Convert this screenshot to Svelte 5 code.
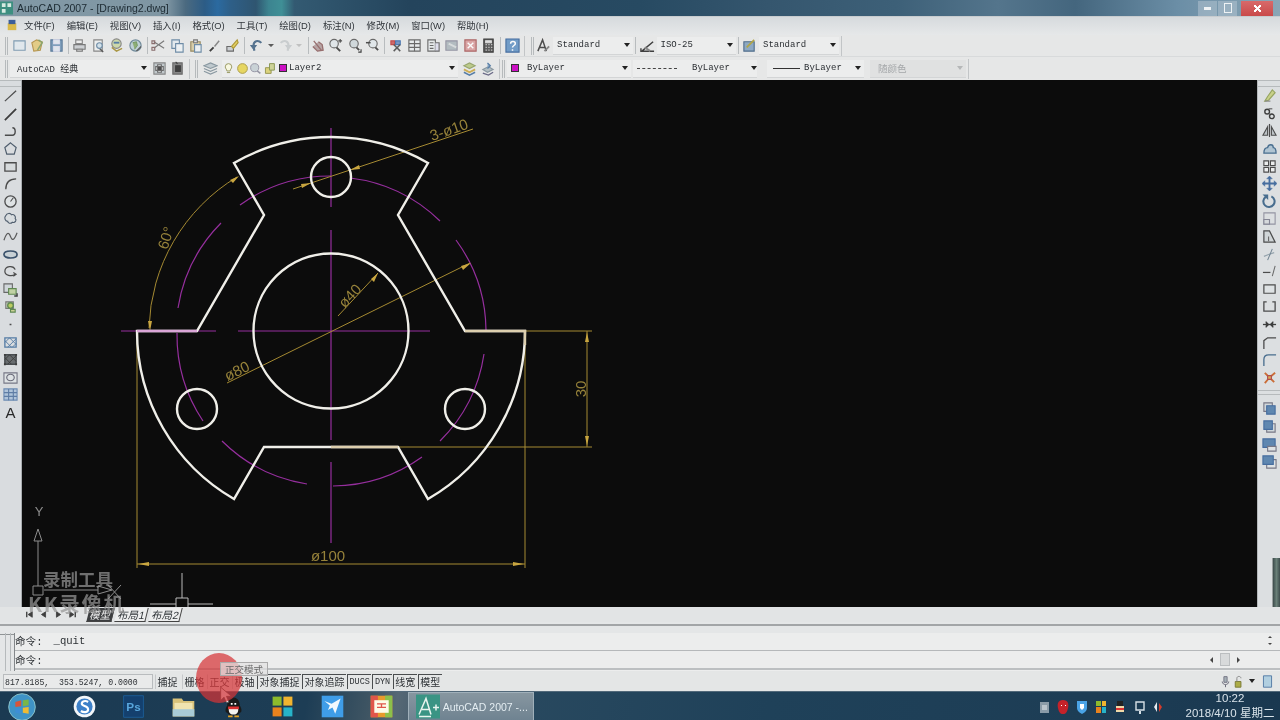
<script>
  const ink = '#2f3438';
  const p = (d, s = ink, f = 'none', w = 1.2) => ({ d, s, f, w });

  const ic = {
    page: [p('M2 3h12v10H2z', '#6f8fa8', '#dfe8ee')],
    open: [p('M2 5l5-3 6 2-2 9-7 1z', '#b08a3a', '#e2c877'), p('M9 2l4 3-5 8', '#7a9a5a', 'none', 1.6)],
    save: [p('M2 2h12v12H2z', '#44698f', '#6f93b5'), p('M5 2h6v4H5zM5 9h6v5H5z', '#dde', '#dfe6ec')],
    print: [p('M4 2h7v4H4z', '#777', '#eee'), p('M2 7h12v5H2z', '#666', '#c9cdd0'), p('M5 12h6v2H5z', '#666', '#fff')],
    preview: [p('M3 2h9v12H3z', '#777', '#eef0f0'), p('M9 11l4 4', '#444', 'none', 1.6), p('M6 8a3 3 0 1 0 6 0a3 3 0 1 0-6 0', '#5a7d9c', '#cfe0ea')],
    plot: [p('M3 6a5 5 0 1 0 10 0a5 5 0 1 0-10 0', '#777', '#c9d6a0'), p('M3 10l5 4 6-3', '#a08a2a', 'none', 1.6), p('M5 5h6', '#3f6c9c', 'none', 2)],
    globe: [p('M2 8a6 6 0 1 0 12 0a6 6 0 1 0-12 0', '#5c7a8c', '#b9ccd4'), p('M5 5l4-1 1 4-3 4', '#5f8a4a', '#7ea463', 1), p('M9 14l5-5', '#444', 'none', 1.4)],
    cut: [p('M3 4l11 7M3 11l11-8', '#666', 'none', 1.2), p('M1 3h3v3H1zM1 10h3v3H1z', '#7a5a5a', 'none', 1.2)],
    copy: [p('M2 2h8v9H2z', '#5a7d9c', '#e3eaef'), p('M6 6h8v9H6z', '#5a7d9c', '#eef2f5')],
    paste: [p('M3 4h10v10H3z', '#8a7a4a', '#d5c9a0'), p('M6 2h4v3H6z', '#666', '#ddd'), p('M7 7h7v8H7z', '#5a7d9c', '#eef2f5')],
    brush: [p('M3 14l4-4', '#222', 'none', 2), p('M8 9l5-6', '#777', 'none', 1.6)],
    match: [p('M2 9h7v5H2z', '#555', '#c9cdd0'), p('M7 9l6-7 1 3-5 6z', '#a38a1a', '#e3cc4a')],
    undo: [p('M13 5C9 1 4 3 4 8l1 6', '#3d5f80', 'none', 2.4), p('M1 8h6l-3 4z', '#3d5f80', '#3d5f80')],
    redo: [p('M3 5c4-4 9-2 9 3l-1 6', '#c5c9cb', 'none', 2.4), p('M15 8H9l3 4z', '#c5c9cb', '#c5c9cb')],
    dd: [p('M6 7h4l-2 2z', '#444', '#444')],
    ddoff: [p('M6 7h4l-2 2z', '#bbb', '#bbb')],
    pan: [p('M4 3l8 10M3 9l5 5 6-1-1-6-4-3', '#8a5a5a', '#b09a9a', 1.4)],
    zoom: [p('M2 6a4.5 4.5 0 1 0 9 0a4.5 4.5 0 1 0-9 0', '#555', '#dfe6ea'), p('M9 10l4 4', '#333', 'none', 2), p('M11 3h4M13 1v4', '#333')],
    zoomw: [p('M3 6a4.5 4.5 0 1 0 9 0a4.5 4.5 0 1 0-9 0', '#555', '#cdd6da'), p('M10 10l3 3', '#333', 'none', 2), p('M12 15h3v-3', '#222')],
    zoomp: [p('M4 6a4.5 4.5 0 1 0 9 0a4.5 4.5 0 1 0-9 0', '#555', '#dfe6ea'), p('M11 10l3 3', '#333', 'none', 2), p('M1 5h5', '#333', 'none', 1.6)],
    props: [p('M2 3h4v4H2z', '#b33', '#c55'), p('M7 3h5v4H7z', '#36a', '#68b'), p('M5 7l7 7M12 7l-7 7', '#444', 'none', 1.6)],
    grid: [p('M2 2h12v12H2z', '#555', '#e8ecee'), p('M8 2v12M2 6h12M2 10h12', '#555')],
    sheet: [p('M2 2h8v12H2z', '#555', '#e8ecee'), p('M4 5h4M4 8h4M4 11h4', '#555'), p('M10 5h4v9h-4', '#555', '#dde')],
    palette: [p('M2 3h12v10H2z', '#889', '#a9b4ba'), p('M5 6l8 4', '#d5d9db', 'none', 2)],
    markup: [p('M2 2h12v12H2z', '#a35050', '#d89a9a'), p('M5 5l6 6M11 5l-6 6', '#fff', 'none', 1.5)],
    calc: [p('M3 1h10v14H3z', '#222', '#444'), p('M5 3h6v2H5z', '#ddd', '#ddd'), p('M5 7h1M8 7h1M11 7h1M5 10h1M8 10h1M11 10h1M5 13h1M8 13h1M11 13h1', '#eee', 'none', 1.4)],
    help: [p('M1 1h14v14H1z', '#2c5a94', '#5d8fc2'), p('M6 6c0-3 5-3 5 0c0 2-3 2-3 4M8 12v1.5', '#fff', 'none', 1.6)],
    tstyle: [p('M2 14L7 2l4 12M4 10h6', '#333', 'none', 1.6), p('M9 14l5-5', '#777', 'none', 2)],
    dstyle: [p('M1 14h14M2 14l12-10', '#222', 'none', 1.6), p('M5 10l6 4', '#777', 'none', 2), p('M1 11v4', '#222', 'none', 1.5)],
    tblstyle: [p('M2 4h11v10H2z', '#36587c', '#7f9fbd'), p('M5 10l8-8', '#a89a2a', 'none', 1.8)],
    wsset: [p('M2 2h12v12H2z', '#777', '#bcc4c8'), p('M6 4h4v8H6zM4 6h8v4H4z', '#555', '#e4e6e6'), p('M7 7h2v2H7z', '#333', '#333')],
    wslock: [p('M3 2h10v12H3z', '#555', '#777'), p('M6 5h5v6H6z', '#222', '#222'), p('M6 1l2 2', '#222')],
    layers: [p('M1 5l7-3 7 3-7 3z', '#7a8b95', '#b9c4ca'), p('M1 8l7 3 7-3M1 11l7 3 7-3', '#7a8b95')],
    bulb: [p('M4 6a4 4 0 1 1 8 0c0 2-2 3-2 5H6c0-2-2-3-2-5zM6 13h4', '#8a8a4a', '#fbfbe0')],
    sun: [p('M2 8a6 6 0 1 0 12 0a6 6 0 1 0-12 0', '#a09030', '#e6d24a')],
    frozen: [p('M2 7a5 5 0 1 0 10 0a5 5 0 1 0-10 0', '#889', '#c3ced3'), p('M10 11l4 3', '#889', 'none', 2)],
    lock: [p('M3 7h7v7H3z', '#8a8a3a', '#d9cf6a'), p('M8 2h6v8H8z', '#7a8a3a', '#c9d08a')],
    match2: [p('M2 5l6-3 6 3-6 3z', '#8a9a5a', '#b7c77a'), p('M2 9l6 3 6-3', '#c9a33a', 'none', 2), p('M2 12l6 3 6-3', '#3f6c9c', 'none', 1.6)],
    prev2: [p('M3 9l6-3 5 3-6 3z', '#7a8b95', '#aab7bd'), p('M8 2l3 3-3 3', '#3f6c9c', '#7f9fbd', 1.4), p('M3 13l6 2 5-3', '#557', 'none', 1.4)],

    line: [p('M2 14L14 3', '#333', 'none', 1.3)],
    xline: [p('M2 15L14 3', '#222', 'none', 1.8)],
    pline: [p('M2 13h8c4 0 4-8 0-8', '#333', 'none', 1.5)],
    polygon: [p('M8 2l6 5-2 7H4L2 7z', '#38485a', 'none', 1.3)],
    rect: [p('M2 4h12v9H2z', '#333', '#d6dadc', 1.4)],
    arc: [p('M3 14C3 7 7 3 14 3', '#333', 'none', 1.4)],
    circle: [p('M2 8a6 6 0 1 0 12 0a6 6 0 1 0-12 0', '#333', '#dfe4e6', 1.4), p('M8 8l3-4', '#333')],
    cloud: [p('M3 5c1-3 5-3 6-1c3-1 5 2 4 4c2 2 0 5-3 4c-2 2-5 1-5-1c-3 0-4-4-2-6z', '#38485a', '#d8dde0')],
    spline: [p('M1 12c3-9 5-9 7-4s4 4 7-4', '#444', 'none', 1.3)],
    ellipse: [p('M1 8c0-5 14-5 14 0s-14 5-14 0z', '#1f3a58', '#c5ced4', 1.8)],
    earc: [p('M13 6C11 1 2 2 2 8c0 4 7 6 11 3', '#333', 'none', 1.3), p('M11 9l3 2-3 2', '#333')],
    insert: [p('M1 2h9v9H1z', '#555', '#cfd6da'), p('M6 7h8v6H6z', '#4a7a3a', '#bcd09a'), p('M12 15h3v-3', '#222', 'none', 1.5)],
    block: [p('M3 3h8v7H3z', '#666', '#cbd5bc'), p('M5 7a3 3 0 1 0 6 0a3 3 0 1 0-6 0', '#4a7a3a', '#b5c94a', 1.4), p('M8 11h5v3H8z', '#4a7a3a', '#c9d08a')],
    point: [p('M8 7.2v1.6', '#333', 'none', 2)],
    hatch: [p('M2 3h12v10H2z', '#3f6c9c', 'none', 1.4), p('M2 8l5-5M5 13l9-9M10 13l4-4M2 6l7 7M7 3l7 7', '#3f6c9c', 'none', 1)],
    gradient: [p('M2 3h12v10H2z', '#2f3438', '#55595c', 1.6), p('M2 8l5-5M5 13l9-9M2 6l7 7M7 3l7 7', '#222', 'none', 1), p('M1 3h2M13 3h2M1 13h2M13 13h2', '#222', 'none', 2)],
    region: [p('M1 3h14v11H1z', '#667', '#dfe4e6'), p('M4 8a4 3.5 0 1 0 8 0a4 3.5 0 1 0-8 0', '#556', 'none')],
    table: [p('M1 2h14v12H1z', '#5a7dac', '#a9c0da'), p('M1 6h14M1 10h14M6 2v12M11 2v12', '#4a6d9c')],

    erase: [p('M3 14l3-5 5-7 3 3-7 8z', '#8a9a4a', '#c5cf7a'), p('M3 14h6', '#777')],
    rcopy: [p('M3 6a2.5 2.5 0 1 0 5 0a2.5 2.5 0 1 0-5 0M8 11a2.5 2.5 0 1 0 5 0a2.5 2.5 0 1 0-5 0', '#222', 'none', 1.5), p('M7 3h4', '#444')],
    mirror: [p('M8 1v14', '#333', 'none', 1.2), p('M6 4L1 13h5zM10 4l5 9h-5z', '#333', '#b8bfc3')],
    offset: [p('M2 13c0-4 2-6 4-6c1-4 6-4 6 0c2 0 3 3 3 6z', '#2f5a80', '#a9c0d0', 1.4)],
    array: [p('M2 2h5v5H2zM9 2h5v5H9zM2 9h5v5H2zM9 9h5v5H9z', '#333', '#eef0f0', 1.2)],
    move: [p('M8 1v14M1 8h14', '#2c5a94', 'none', 2), p('M8 0l3 3H5zM8 16l3-3H5zM0 8l3-3v6zM16 8l-3-3v6z', '#2c5a94', '#2c5a94', .5)],
    rotate: [p('M4 3a6 6 0 1 0 6-.5', '#2f5a80', 'none', 2.2), p('M2 1l4 0 0 4z', '#2f5a80', '#2f5a80')],
    scale: [p('M2 2h12v12H2z', '#889', 'none'), p('M2 9h6v5H2z', '#778', '#d5d9dc')],
    stretch: [p('M2 14V2h6l6 12z', '#333', '#cfd4d6', 1.3), p('M7 8v5', '#555')],
    trim: [p('M2 10l5-2 6-2', '#8a9aa5', 'none', 1.2), p('M11 2L6 14', '#5f7484', 'none', 1.1)],
    extend: [p('M1 9h8', '#333', 'none', 1.3), p('M14 2l-3 11', '#555', 'none', 1.1)],
    brk: [p('M2 3h12v9H2z', '#333', '#dfe3e5', 1.3)],
    brk2: [p('M5 3H2v10h12V3h-3', '#333', 'none', 1.4)],
    join: [p('M1 8h14', '#222', 'none', 1.4), p('M4 5l3 3-3 3M12 5L9 8l3 3', '#222', '#222')],
    chamfer: [p('M2 15V6l4-3h9', '#333', 'none', 1.4)],
    fillet: [p('M2 15V8c0-3 2-5 5-5h8', '#2f5a80', 'none', 1.4)],
    explode: [p('M8 8L3 3M8 8l6-5M8 8l-5 6M8 8l5 5', '#c85a1a', 'none', 2), p('M6 6h4v4H6z', '#a33', '#d9a33a')],
    ordF: [p('M2 2h9v9H2z', '#667', '#cfd6da'), p('M5 5h9v9H5z', '#2c5a94', '#4a78a8')],
    ordB: [p('M5 5h9v9H5z', '#667', '#cfd6da'), p('M2 2h9v9H2z', '#2c5a94', '#4a78a8')],
    ordA: [p('M1 2h13v9H1z', '#2c5a94', '#4a78a8'), p('M6 10h9v5H6z', '#667', '#dfe3e5')],
    ordU: [p('M5 6h10v9H5z', '#667', '#dfe3e5'), p('M1 2h11v9H1z', '#2c5a94', '#4a78a8')],
    mic: [p('M6 2h4v7H6z', '#667', '#99a5ad'), p('M4 8c0 5 8 5 8 0M8 12v3', '#556')],
    lockS: [p('M4 8h7v7H4z', '#6a6a1a', '#a3a32a'), p('M6 8V4c0-3 5-3 5 0', '#777')],
    panel: [p('M3 1h10v14H3z', '#3f6c9c', '#a9cce0')],

    navFirst: [p('M4 4v8', '#222', 'none', 2), p('M12 4v8L6 8z', '#222', '#222')],
    navPrev: [p('M11 4v8L5 8z', '#222', '#222')],
    navNext: [p('M5 4v8l6-4z', '#222', '#222')],
    navLast: [p('M12 4v8', '#222', 'none', 2), p('M4 4v8l6-4z', '#222', '#222')]
  };

  const menus = ['文件(F)', '编辑(E)', '视图(V)', '插入(I)', '格式(O)', '工具(T)', '绘图(D)', '标注(N)', '修改(M)', '窗口(W)', '帮助(H)'];
  const thin = ['undo', 'dd', 'redo', 'ddoff'];
  const groups = [
    ['page', 'open', 'save'],
    ['print', 'preview', 'plot', 'globe'],
    ['cut', 'copy', 'paste', 'brush', 'match'],
    ['undo', 'dd', 'redo', 'ddoff'],
    ['pan', 'zoom', 'zoomw', 'zoomp'],
    ['props', 'grid', 'sheet', 'palette', 'markup', 'calc'],
    ['help']
  ];
  const drawTools = ['line', 'xline', 'pline', 'polygon', 'rect', 'arc', 'circle', 'cloud', 'spline', 'ellipse', 'earc', 'insert', 'block', 'point', 'hatch', 'gradient', 'region', 'table'];
  const modifyTools = ['erase', 'rcopy', 'mirror', 'offset', 'array', 'move', 'rotate', 'scale', 'stretch', 'trim', 'extend', 'brk', 'brk2', 'join', 'chamfer', 'fillet', 'explode'];
  const orderTools = ['ordF', 'ordB', 'ordA', 'ordU'];
  const navs = ['navFirst', 'navPrev', 'navNext', 'navLast'];
  const toggles = [
    { t: '捕捉' }, { t: '栅格' }, { t: '正交' }, { t: '极轴' },
    { t: '对象捕捉', on: true }, { t: '对象追踪', on: true },
    { t: 'DUCS', on: true, mono: true }, { t: 'DYN', on: true, mono: true },
    { t: '线宽', on: true }, { t: '模型', on: true }
  ];

  // drawing geometry, in page pixels
  const outline = 'M234 163A194 194 0 0 1 428 163L398 215L465 331H525A194 194 0 0 1 428 499L398 447H264L234 499A194 194 0 0 1 137 331H197L264 215Z';
  const pitchArcs = [
    'M177 333A155 155 0 0 0 203 421',
    'M222 441A155 155 0 0 0 307 484',
    'M333 486A155 155 0 0 0 422 457',
    'M440 441A155 155 0 0 0 484 354',
    'M486 330A155 155 0 0 0 456 240',
    'M440 221A155 155 0 0 0 350 178',
    'M331 176A155 155 0 0 0 240 205',
    'M221 223A155 155 0 0 0 178 308'
  ];
  const holes = [[331, 177], [197, 409], [465, 409]];
</script>

{#snippet icon(name)}
  <svg class="ico" viewBox="0 0 16 16" aria-hidden="true">
    {#each ic[name] as a}
      <path d={a.d} stroke={a.s} fill={a.f} stroke-width={a.w} />
    {/each}
  </svg>
{/snippet}

{#snippet arrow()}
  <span class="arrow"></span>
{/snippet}

<div class="screen">
  <header class="title">
    <svg class="app" viewBox="0 0 14 14" aria-hidden="true">
      <path d="M0 0h14v14H0z" fill="#3d8f80" />
      <path d="M2 2h4v4H2zM8 2h4v4H8zM2 8h4v4H2z" fill="#d7ebe2" />
    </svg>
    <span class="caption">AutoCAD 2007 - [Drawing2.dwg]</span>
    <div class="winbtns">
      <i class="wb"><b class="min"></b></i>
      <i class="wb"><b class="max"></b></i>
      <i class="wb close"><b class="x"></b></i>
    </div>
  </header>

  <nav class="menu">
    <svg class="doc" viewBox="0 0 14 14" aria-hidden="true">
      <path d="M2 5h10v8H2z" fill="#d9b94a" />
      <path d="M3 1h8v5H3z" fill="#3d5f9a" />
    </svg>
    {#each menus as m}<span>{m}</span>{/each}
  </nav>

  <div class="bar one">
    <i class="grip"></i>
    {#each groups as g, n}
      {#if n > 0}<i class="sep"></i>{/if}
      {#each g as name}
        <span class="btn" class:thin={thin.includes(name)} class:first={name === 'undo'} class:pull={name === 'pan'}>{@render icon(name)}</span>
      {/each}
    {/each}
    <i class="edge"></i>
    <i class="grip style"></i>
    <span class="btn">{@render icon('tstyle')}</span>
    <div class="combo flat w-style"><span class="mono">Standard</span>{@render arrow()}</div>
    <i class="sep"></i>
    <span class="btn">{@render icon('dstyle')}</span>
    <div class="combo flat w-dim"><span class="mono">ISO-25</span>{@render arrow()}</div>
    <i class="sep"></i>
    <span class="btn">{@render icon('tblstyle')}</span>
    <div class="combo flat w-tbl"><span class="mono">Standard</span>{@render arrow()}</div>
    <i class="edge"></i>
  </div>

  <div class="bar two">
    <i class="grip"></i>
    <div class="combo w-ws"><span class="mono">AutoCAD 经典</span>{@render arrow()}</div>
    <span class="btn">{@render icon('wsset')}</span>
    <span class="btn">{@render icon('wslock')}</span>
    <i class="edge"></i>
    <i class="grip layer"></i>
    <span class="btn wide">{@render icon('layers')}</span>
    <div class="combo w-layer">
      <span class="mini">{@render icon('bulb')}</span>
      <span class="mini">{@render icon('sun')}</span>
      <span class="mini">{@render icon('frozen')}</span>
      <span class="mini">{@render icon('lock')}</span>
      <b class="swatch"></b>
      <span class="mono">Layer2</span>
      {@render arrow()}
    </div>
    <span class="btn">{@render icon('match2')}</span>
    <span class="btn">{@render icon('prev2')}</span>
    <i class="edge"></i>
    <i class="grip color"></i>
    <div class="combo w-color"><b class="swatch big"></b><span class="mono">ByLayer</span>{@render arrow()}</div>
    <div class="combo w-ltype"><i class="dash"></i><span class="mono">ByLayer</span>{@render arrow()}</div>
    <div class="combo w-lw"><i class="rule"></i><span class="mono">ByLayer</span>{@render arrow()}</div>
    <div class="combo w-plot off"><span>随颜色</span>{@render arrow()}</div>
    <i class="edge"></i>
  </div>

  <main class="work">
    <aside class="tools">
      <i class="hgrip"></i>
      {#each drawTools as name}<span class="tool">{@render icon(name)}</span>{/each}
      <span class="tool letter">A</span>
    </aside>

    <svg class="canvas" viewBox="22 80 1235 527" role="img" aria-label="AutoCAD 图纸">
      <g class="cad-center">
        <path d="M331 128V207M331 230V440M331 462V543M121 331H216M238 331H430" />
        {#each pitchArcs as a}<path d={a} />{/each}
      </g>

      <g class="cad-dim">
        <path d="M293 189L473 129M227 383L470 263M338 316L378 273" />
        <path d="M465 331H592M398 447H592M587 331V447M137 331V568M525 331V568M137 564H525" />
        <path d="M237 177A182 182 0 0 0 149 328" />
        <path class="head" d="M587 332l-2 10h4zM587 446l-2-10h4zM138 564l11-2v4zM524 564l-11-2v4zM471 263l-10 3 2 4zM378 273l-7 6 3 3zM311 183l-10 1 1 4zM350 170l10-1-1-4zM150 331l-2-10h4zM239 176l-9 4 3 3z" />
      </g>

      <g class="cad-text">
        <text x="449" y="135" transform="rotate(-19 449 130)">3-ø10</text>
        <text x="166" y="243" transform="rotate(-72 166 238)">60°</text>
        <text x="350" y="301" transform="rotate(-47 350 296)">ø40</text>
        <text x="237" y="376" transform="rotate(-26 237 371)">ø80</text>
        <text x="581" y="394" transform="rotate(-90 581 389)">30</text>
        <text x="328" y="561">ø100</text>
      </g>

      <g class="cad-part">
        <path d={outline} />
        <circle cx="331" cy="331" r="77.5" />
        {#each holes as h}<circle cx={h[0]} cy={h[1]} r="20" />{/each}
      </g>
      <path class="cad-tint" d="M137 331H197" />
      <path class="cad-cream" d="M465 331H525V345M331 447H398" />

      <g class="cad-ucs">
        <path d="M38 541V586M44 590H98M33 586h10v9H33zM38 529l-4 12h8zM98 586l14 4-14 4zM108 585l13 14M121 585l-13 14" />
        <text x="39" y="516">Y</text>
        <path class="cross" d="M182 573V598M150 604H176M188 604H213M176 598h12v12h-12z" />
      </g>
    </svg>

    <aside class="tools right">
      <i class="hgrip"></i>
      {#each modifyTools as name}<span class="tool">{@render icon(name)}</span>{/each}
      <i class="hgrip mid"></i>
      {#each orderTools as name}<span class="tool">{@render icon(name)}</span>{/each}
      <i class="vslider"></i>
    </aside>
  </main>

  <div class="tabs">
    {#each navs as n}<span class="nav">{@render icon(n)}</span>{/each}
    <span class="tab on">模型</span>
    <span class="tab">布局1</span>
    <span class="tab">布局2</span>
  </div>

  <div class="gutter"></div>

  <section class="cmd">
    <i class="cgrip"></i>
    <div class="lines">
      <div class="ln">命令:<span class="q">_quit</span><span class="ud"><i class="up"></i><i class="down"></i></span></div>
      <div class="ln">命令:<span class="hs"><i class="left"></i><i class="thumb"></i><i class="right"></i></span></div>
    </div>
  </section>

  <footer class="status">
    <div class="coords">817.8185,&nbsp; 353.5247, 0.0000</div>
    {#each toggles as s}
      <span class="tg" class:on={s.on} class:mono={s.mono}>{s.t}</span>
    {/each}
    <div class="tray-r">
      <span class="mini">{@render icon('mic')}</span>
      <span class="mini">{@render icon('lockS')}</span>
      <span class="arrow"></span>
      <span class="mini">{@render icon('panel')}</span>
    </div>
  </footer>

  <div class="taskbar">
    <span class="orb"><svg viewBox="0 0 36 36" aria-hidden="true">
      <circle cx="18" cy="18" r="16" fill="#3f93c6" stroke="#9cc" />
      <path d="M10 12l7-2v7l-7 1z" fill="#d9553a" /><path d="M19 10l7-1v7l-7 1z" fill="#7ab648" />
      <path d="M10 20l7-1v7l-7-1z" fill="#3d8fd6" /><path d="M19 19l7-1v8l-7-1z" fill="#eebb33" />
    </svg></span>
    <span class="pin"><svg viewBox="0 0 30 30" aria-hidden="true">
      <circle cx="15" cy="15" r="12" fill="#f3f6f9" /><circle cx="15" cy="15" r="9" fill="#3d80c8" />
      <path d="M19 10c-3-2-7-1-7 2s7 2 7 6s-5 4-8 2" stroke="#fff" stroke-width="2.4" fill="none" />
    </svg></span>
    <span class="pin"><svg viewBox="0 0 30 30" aria-hidden="true">
      <path d="M4 3h22v24H4z" fill="#14406e" /><path d="M4 3h22v24H4z" fill="none" stroke="#1c5d99" />
      <text class="ps" x="15" y="20">Ps</text>
    </svg></span>
    <span class="pin"><svg viewBox="0 0 30 30" aria-hidden="true">
      <path d="M3 6h10l2 3h12v17H3z" fill="#d8c27a" /><path d="M5 11h20v14H5z" fill="#f0e4b0" />
      <path d="M3 18h24v8H3z" fill="#a9cbd6" />
    </svg></span>
    <span class="pin"><svg viewBox="0 0 30 30" aria-hidden="true">
      <path d="M8 14c0-12 14-12 14 0c3 5 2 8 0 8c-2 4-12 4-14 0c-2 0-3-3 0-8z" fill="#1a1a1a" />
      <path d="M10 16c2 2 8 2 10 0c1 5-1 8-5 8s-6-3-5-8z" fill="#f4f4f0" /><path d="M9 15h12v3H9z" fill="#d33" />
      <path d="M12 11h2v2h-2zM16 11h2v2h-2z" fill="#fff" /><path d="M9 25h5v2H9zM16 25h5v2h-5z" fill="#e8a21f" />
    </svg></span>
    <span class="pin"><svg viewBox="0 0 30 30" aria-hidden="true">
      <path d="M4 4h10v10H4z" fill="#8dbb2c" /><path d="M16 4h10v10H16z" fill="#f1b42f" />
      <path d="M4 16h10v10H4z" fill="#e8821e" /><path d="M16 16h10v10H16z" fill="#27b3c8" />
    </svg></span>
    <span class="pin"><svg viewBox="0 0 30 30" aria-hidden="true">
      <path d="M3 3h24v24H3z" fill="#3f9de8" />
      <path d="M6 9l8 3 10-6-6 17-3-7-5 3 2-5z" fill="#f1f8fd" />
    </svg></span>
    <span class="pin"><svg viewBox="0 0 30 30" aria-hidden="true">
      <path d="M3 3h24v24H3z" fill="#e89a2c" /><path d="M3 3h8v24H3z" fill="#e0564a" /><path d="M19 3h8v24h-8z" fill="#8cc04a" />
      <path d="M7 8h16v14H7z" fill="#fdfbe8" /><path d="M10 12h10M10 16h10M15 12v4" stroke="#e0564a" fill="none" stroke-width="1.5" />
    </svg></span>

    <div class="task">
      <svg viewBox="0 0 24 24" aria-hidden="true">
        <path d="M0 0h24v24H0z" fill="#3a9484" />
        <path d="M3 20L10 4l5 16M6 15h8M3 22h12M17 13h6M20 10v6" stroke="#e8f4ee" stroke-width="1.5" fill="none" />
      </svg>
      <span>AutoCAD 2007 -...</span>
    </div>

    <div class="systray">
      <svg viewBox="0 0 128 16" aria-hidden="true">
        <path d="M1 3h9v11H1z" fill="#8a9ba8" /><path d="M3 6h5v5H3z" fill="#b9c4cc" />
        <path d="M24 1c5 0 6 4 5 8s-2 6-5 6s-4-2-5-6s0-8 5-8z" fill="#c4222a" /><path d="M22 6h1v1h-1zM26 6h1v1h-1z" fill="#fff" />
        <path d="M38 2h10v7c0 3-3 5-5 6c-2-1-5-3-5-6z" fill="#4aa3e6" /><path d="M41 5h4v4l-2 2l-2-2z" fill="#fff" />
        <path d="M57 2h5v5h-5z" fill="#8dbb2c" /><path d="M63 2h4v5h-4z" fill="#f1b42f" /><path d="M57 8h5v6h-5z" fill="#e8821e" /><path d="M63 8h4v6h-4z" fill="#27b3c8" />
        <path d="M78 2h6v5h-6z" fill="#222" /><path d="M77 7h8v6h-8z" fill="#f0d9a8" /><path d="M77 9h8v2h-8z" fill="#d33" />
        <path d="M97 3h8v8h-8z" fill="none" stroke="#d6e0e6" stroke-width="1.4" /><path d="M100 12h2v3h-2z" fill="#d6e0e6" />
        <path d="M118 3l-3 5l3 5z" fill="#e8ecef" /><path d="M120 4l3 4l-3 5z" fill="#d63a2a" />
      </svg>
      <div class="clock"><span>10:22</span><span>2018/4/10 星期二</span></div>
    </div>
  </div>

  <!-- screen recorder overlays -->
  <div class="mark">
    <span class="m1">录制工具</span>
    <span class="m2">KK录像机</span>
  </div>
  <svg class="cursor" viewBox="0 0 18 22" aria-hidden="true">
    <path d="M2 1v16l4-4 3 7 3-1-3-7h6z" fill="#e9eef2" stroke="#3b3b3b" />
  </svg>
  <div class="ripple"></div>
  <div class="tip">正交模式</div>
</div>

<style>
  :global(body) {
    margin: 0;
    background: #dfe1e2;
  }

  .screen {
    position: relative;
    width: 1280px;
    height: 720px;
    display: flex;
    flex-direction: column;
    overflow: hidden;
    background: #e4e6e7;
    color: #2b2f33;
    font-family: "Liberation Sans", "Noto Sans CJK SC", sans-serif;
    font-size: 10px;
    filter: blur(0.45px);
  }

  .mono {
    font-family: "Liberation Mono", "Noto Sans CJK SC", monospace;
    font-size: 9px;
  }

  .title {
    height: 16px;
    flex: none;
    display: flex;
    align-items: center;
    gap: 4px;
    font-size: 10.5px;
    background: linear-gradient(90deg, #8299a6 0, #7f96a3 13%, #4b6a80 14.5%, #2c5c86 16%, #2b6aa0 17%, #2e5f88 18%, #2f5570 20%, #3c8490 21%, #3f8f96 22%, #335a72 23%, #24445c 32%, #274a62 50%, #35566e 60%, #3d6078 70%, #54758c 78%, #44667e 84%, #6b8ea6 92%, #8aa6b6 100%);
  }

  .caption {
    color: #1c2a32;
  }

  .app {
    width: 13px;
    height: 14px;
    flex: none;
  }

  .winbtns {
    display: flex;
    align-items: center;
    gap: 1px;
    margin-left: auto;
    margin-right: 7px;
    height: 16px;
  }

  .wb {
    width: 19px;
    height: 15px;
    display: flex;
    align-items: center;
    justify-content: center;
    background: rgba(190, 205, 214, 0.45);
  }

  .wb.close {
    width: 32px;
    margin-left: 3px;
    background: linear-gradient(#d86a6a, #c94a4a);
  }

  .min {
    width: 7px;
    height: 3px;
    background: #eef2f4;
  }

  .max {
    width: 6px;
    height: 8px;
    border: 1px solid #eef2f4;
  }

  .x {
    width: 7px;
    height: 7px;
    background:
      linear-gradient(45deg, transparent 42%, #fff 42%, #fff 58%, transparent 58%),
      linear-gradient(-45deg, transparent 42%, #fff 42%, #fff 58%, transparent 58%);
  }

  .menu {
    height: 19px;
    flex: none;
    display: flex;
    align-items: center;
    gap: 11.9px;
    padding: 0 0 2px 6px;
    font-size: 9.4px;
    color: #30353a;
    background: linear-gradient(#d6dadd, #e6e8e9);
    border-top: 1px solid #c8cccf;
    box-sizing: border-box;
  }

  .doc {
    width: 12px;
    height: 14px;
    margin-right: -5.9px;
    flex: none;
  }

  .bar {
    flex: none;
    display: flex;
    align-items: center;
    box-sizing: border-box;
    background: #e6e7e7;
  }

  .one {
    height: 22px;
    padding-left: 5px;
    border-bottom: 1px solid #d8dadb;
  }

  .two {
    height: 23px;
    padding-left: 5px;
  }

  .grip {
    width: 3px;
    height: 18px;
    margin-right: 2px;
    border-left: 1px solid #b6babc;
    border-right: 1px solid #b6babc;
    box-sizing: border-box;
    flex: none;
  }

  .grip.style {
    margin-left: 6px;
    margin-right: 1px;
  }

  .grip.layer {
    margin-left: 5px;
    margin-right: 0;
  }

  .grip.color {
    margin-left: 2px;
    margin-right: 2px;
  }

  .sep {
    width: 1px;
    height: 17px;
    margin: 0 2px;
    background: #b8bcbe;
    flex: none;
  }

  .edge {
    width: 1px;
    height: 20px;
    margin-left: 2px;
    background: #c2c5c7;
    flex: none;
  }

  .btn {
    width: 18.5px;
    height: 18px;
    display: flex;
    align-items: center;
    justify-content: center;
    flex: none;
  }

  .btn.thin {
    width: 14px;
  }

  .btn.first {
    margin-left: 3px;
  }

  .btn.pull {
    margin-left: -3px;
  }

  .btn.wide {
    width: 24px;
  }

  .ico {
    width: 15px;
    height: 15px;
    display: block;
    opacity: 0.85;
  }

  .mini {
    width: 13.5px;
    height: 14px;
    display: flex;
    align-items: center;
    flex: none;
  }

  .mini .ico {
    width: 13px;
    height: 13px;
  }

  .combo {
    height: 18px;
    display: flex;
    align-items: center;
    gap: 4px;
    padding: 0 3px 0 4px;
    margin-right: 2px;
    box-sizing: border-box;
    background: #eceded;
    border-bottom: 1px solid #d3d5d6;
    flex: none;
  }

  .combo.flat {
    margin-right: 0;
  }

  .arrow {
    width: 0;
    height: 0;
    margin-left: auto;
    border: 3px solid transparent;
    border-top: 4px solid #222;
    border-bottom: 0;
    flex: none;
  }

  .w-style { width: 80px; }
  .w-dim { width: 79px; }
  .w-tbl { width: 80px; }
  .w-ws { width: 140px; padding-left: 7px; margin-right: 0; }
  .w-layer { width: 236px; gap: 0; padding-left: 0; }
  .w-color { width: 124px; gap: 6px; }
  .w-ltype { width: 124px; gap: 15px; padding-right: 0; margin-right: 0; }
  .w-lw { width: 97px; margin-left: 10px; }
  .w-plot { width: 96px; margin-left: 4px; margin-right: 0; }

  .off {
    color: #a4a7a9;
    background: #e0e1e1;
    font-size: 9.5px;
    padding-left: 8px;
  }

  .off .arrow {
    border-top-color: #b5b7b8;
  }

  .swatch {
    width: 8px;
    height: 8px;
    margin: 0 2px 0 3px;
    background: #cc11c4;
    border: 1px solid #333;
    box-sizing: border-box;
    flex: none;
  }

  .swatch.big {
    margin: 0 2px 0 0;
  }

  .dash {
    width: 40px;
    height: 0;
    border-top: 1px dashed #444;
    flex: none;
  }

  .rule {
    width: 27px;
    height: 0;
    margin-left: 2px;
    border-top: 1px solid #333;
    flex: none;
  }

  .work {
    height: 527px;
    flex: none;
    display: grid;
    grid-template-columns: 22px 1fr 23px;
  }

  .canvas {
    width: 1235px;
    height: 527px;
    display: block;
    background: #0c0c0c;
  }

  .cad-center path {
    fill: none;
    stroke: #962f9e;
    stroke-width: 1.2;
  }

  .cad-dim path {
    fill: none;
    stroke: #a58a32;
    stroke-width: 1;
  }

  .cad-dim .head {
    fill: #c9a640;
    stroke: none;
  }

  .cad-text text {
    fill: #96823a;
    font-family: "Liberation Sans", sans-serif;
    font-size: 15px;
    text-anchor: middle;
  }

  .cad-part path,
  .cad-part circle {
    fill: none;
    stroke: #f0efe9;
    stroke-width: 2.4;
    stroke-linejoin: miter;
  }

  .cad-tint {
    fill: none;
    stroke: #dba6d8;
    stroke-width: 2.4;
  }

  .cad-cream {
    fill: none;
    stroke: #ddcfae;
    stroke-width: 2.4;
  }

  .cad-ucs path {
    fill: none;
    stroke: #8c8c8c;
    stroke-width: 1;
  }

  .cad-ucs text {
    fill: #8c8c8c;
    font-family: "Liberation Sans", sans-serif;
    font-size: 13px;
    text-anchor: middle;
  }

  .cad-ucs .cross {
    stroke: #b9b9b9;
  }

  .tools {
    position: relative;
    display: flex;
    flex-direction: column;
    align-items: center;
    background: #d9dcdf;
    border-right: 1px solid #a9adb0;
    box-sizing: border-box;
  }

  .tools.right {
    border-right: 0;
    border-left: 1px solid #b5b9bb;
    background: #dcdfe1;
  }

  .hgrip {
    width: 100%;
    height: 7px;
    border-top: 1px solid #b6babc;
    border-bottom: 1px solid #b6babc;
    box-sizing: border-box;
    flex: none;
  }

  .hgrip.mid {
    height: 5px;
    margin: 4px 0 5px;
  }

  .tool {
    height: 17.6px;
    width: 100%;
    display: flex;
    align-items: center;
    justify-content: center;
    flex: none;
  }

  .letter {
    font-size: 15px;
    color: #2a2a2a;
  }

  .vslider {
    position: absolute;
    right: 0;
    top: 478px;
    width: 8px;
    height: 49px;
    background: linear-gradient(90deg, #3d4c4c, #6a8078 50%, #3d4c4c);
    border-left: 1px solid #9aa0a0;
    box-sizing: border-box;
  }

  .tabs {
    height: 15px;
    flex: none;
    display: flex;
    align-items: center;
    padding-left: 22px;
    background: #e2e4e5;
    font-size: 10.5px;
    color: #2f3438;
    box-sizing: border-box;
  }

  .nav {
    width: 14.5px;
    display: flex;
    justify-content: center;
    flex: none;
  }

  .nav .ico {
    width: 11px;
    height: 11px;
  }

  .tab {
    height: 14px;
    margin-left: 3px;
    padding: 0 1px 0 2px;
    display: flex;
    align-items: center;
    background: #edeeee;
    border-bottom: 1px solid #444;
    border-right: 1px solid #444;
    box-sizing: border-box;
    transform: skewX(-14deg);
  }

  .tab.on {
    margin-left: 8px;
    color: #f3f3f3;
    background: #3c3e40;
  }

  .gutter {
    height: 11px;
    flex: none;
    box-sizing: border-box;
    background: #e4e6e7;
    border-top: 2px solid #a2a5a7;
    margin-top: 2px;
    margin-bottom: -2px;
    border-bottom: 1px solid #8f9395;
  }

  .cmd {
    height: 38px;
    flex: none;
    display: flex;
    padding-left: 5px;
    box-sizing: border-box;
  }

  .cgrip {
    width: 4px;
    margin-right: 3px;
    border-left: 1px solid #b6babc;
    border-right: 1px solid #b6babc;
    flex: none;
  }

  .lines {
    flex: 1;
    border-left: 1px solid #83878a;
    background: #eceded;
  }

  .ln {
    height: 18px;
    display: flex;
    align-items: center;
    padding: 0 0 2px 0;
    box-sizing: border-box;
    font-family: "Liberation Mono", "Noto Sans CJK SC", monospace;
    font-size: 10.6px;
    color: #2d3135;
    border-bottom: 1px solid #b5b8ba;
  }

  .ln:last-child {
    height: 19px;
    padding-bottom: 0;
    border-bottom: 2px solid #bcbfc1;
  }

  .q {
    margin-left: 11px;
  }

  .ud {
    margin-left: auto;
    margin-right: 8px;
    display: flex;
    flex-direction: column;
    gap: 5px;
  }

  .ud i {
    width: 0;
    height: 0;
    border: 2px solid transparent;
    border-top: 0;
    border-bottom: 2px solid #444;
  }

  .ud .down {
    border-bottom: 0;
    border-top: 2px solid #444;
  }

  .hs {
    margin-left: auto;
    margin-right: 40px;
    display: flex;
    align-items: center;
    gap: 7px;
  }

  .hs .left,
  .hs .right {
    width: 0;
    height: 0;
    border: 3px solid transparent;
  }

  .hs .left {
    border-left: 0;
    border-right: 3px solid #444;
  }

  .hs .right {
    border-right: 0;
    border-left: 3px solid #444;
  }

  .hs .thumb {
    width: 10px;
    height: 13px;
    background: #d8dadb;
    border: 1px solid #bbbec0;
    box-sizing: border-box;
  }

  .status {
    position: relative;
    height: 20px;
    flex: none;
    display: flex;
    align-items: center;
    padding-left: 3px;
    box-sizing: border-box;
    font-size: 10px;
    color: #2d3135;
    background: #e4e6e6;
  }

  .coords {
    width: 150px;
    height: 15px;
    margin-right: 1px;
    line-height: 15px;
    font-family: "Liberation Mono", monospace;
    font-size: 8.2px;
    background: #e9eaea;
    border: 1px solid #b9bcbe;
    box-sizing: border-box;
    padding-left: 1px;
    white-space: nowrap;
  }

  .tg {
    height: 15px;
    padding: 0 1.5px;
    margin-left: 1px;
    line-height: 15px;
    border-top: 1px solid transparent;
    border-left: 1px solid #c6c8ca;
    box-sizing: border-box;
    white-space: nowrap;
    flex: none;
  }

  .tg:first-of-type {
    margin-right: 2px;
  }

  .tg.on {
    border-top: 1px solid #4a4d4f;
    border-left: 1px solid #4a4d4f;
  }

  .tg.mono {
    font-family: "Liberation Mono", monospace;
    font-size: 8.5px;
  }

  .tray-r {
    margin-left: auto;
    margin-right: 6px;
    display: flex;
    align-items: center;
  }

  .tray-r .arrow {
    margin: 0 6px 0 3px;
  }

  .taskbar {
    height: 30px;
    flex: none;
    display: flex;
    align-items: center;
    background: linear-gradient(100deg, #1b3a52 0, #1d3d55 24%, #3f5563 29%, #566875 31%, #2a4a60 37%, #1f4159 60%, #1d3d55 85%, #1a3850 100%);
    border-top: 1px solid #52697a;
    box-sizing: border-box;
  }

  .orb {
    width: 44px;
    margin-right: 15.5px;
    display: flex;
    justify-content: center;
    flex: none;
  }

  .orb svg {
    width: 30px;
    height: 30px;
  }

  .pin {
    width: 49.6px;
    display: flex;
    justify-content: center;
    flex: none;
  }

  .pin svg {
    width: 27px;
    height: 27px;
  }

  .ps {
    fill: #58a6dc;
    font-family: "Liberation Sans", sans-serif;
    font-size: 13px;
    font-weight: 700;
    text-anchor: middle;
  }

  .task {
    width: 126px;
    height: 29px;
    margin-left: 1px;
    display: flex;
    align-items: center;
    gap: 3px;
    padding-left: 7px;
    box-sizing: border-box;
    font-size: 10.5px;
    color: #e4edf2;
    background: linear-gradient(#8796a0, #6f8391);
    border: 1px solid #a0b0ba;
    flex: none;
  }

  .task svg {
    width: 24px;
    height: 25px;
    flex: none;
  }

  .systray {
    margin-left: auto;
    display: flex;
    align-items: center;
  }

  .systray svg {
    width: 128px;
    height: 16px;
    margin-right: 13px;
  }

  .clock {
    width: 100px;
    display: flex;
    flex-direction: column;
    align-items: center;
    padding-bottom: 2px;
    line-height: 15px;
    font-size: 11.5px;
    color: #d9e3ea;
    white-space: nowrap;
  }

  .mark {
    position: absolute;
    left: 28px;
    top: 568px;
    display: flex;
    flex-direction: column;
    width: 103px;
    font-weight: 700;
    color: rgba(150, 150, 150, 0.72);
    font-family: "Noto Sans CJK SC", sans-serif;
    pointer-events: none;
  }

  .m1 {
    height: 22px;
    font-size: 17.5px;
    line-height: 22px;
    margin-left: 15px;
    white-space: nowrap;
  }

  .m2 {
    height: 26px;
    font-size: 20.5px;
    line-height: 26px;
    letter-spacing: 1.6px;
    white-space: nowrap;
  }

  .ripple {
    position: absolute;
    left: 196px;
    top: 653px;
    width: 46px;
    height: 50px;
    border-radius: 50%;
    background: rgba(214, 52, 56, 0.72);
  }

  .tip {
    position: absolute;
    left: 220px;
    top: 662px;
    width: 48px;
    height: 14px;
    line-height: 14px;
    text-align: center;
    font-size: 9.5px;
    color: #6a6a6a;
    background: rgba(226, 226, 226, 0.72);
    border: 1px solid #aaa;
    box-sizing: border-box;
  }

  .cursor {
    position: absolute;
    left: 219px;
    top: 686px;
    width: 15px;
    height: 19px;
  }
</style>
